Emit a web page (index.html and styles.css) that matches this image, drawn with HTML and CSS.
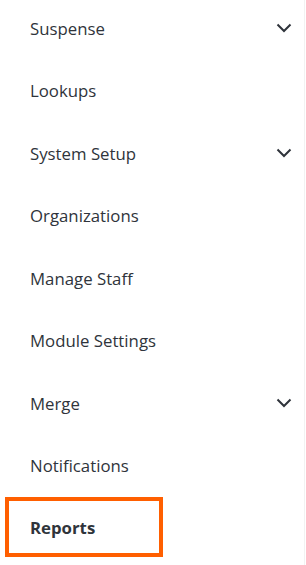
FILE: index.html
```html
<!DOCTYPE html>
<html lang="en">
<head>
    <meta charset="UTF-8">
    <meta name="viewport" content="width=device-width, initial-scale=1.0">
    <title>Admin Menu</title>
    <link rel="stylesheet" href="styles.css">
</head>
<body>
    <nav class="side-menu">
        <a class="menu-item" href="#">
            <span>Suspense</span>
            <svg class="chevron" viewBox="0 0 16 10" width="16" height="10"><path d="M1.5 1.5 L8 8 L14.5 1.5"/></svg>
        </a>
        <a class="menu-item" href="#"><span>Lookups</span></a>
        <a class="menu-item" href="#">
            <span>System Setup</span>
            <svg class="chevron" viewBox="0 0 16 10" width="16" height="10"><path d="M1.5 1.5 L8 8 L14.5 1.5"/></svg>
        </a>
        <a class="menu-item" href="#"><span>Organizations</span></a>
        <a class="menu-item" href="#"><span>Manage Staff</span></a>
        <a class="menu-item" href="#"><span>Module Settings</span></a>
        <a class="menu-item" href="#">
            <span>Merge</span>
            <svg class="chevron" viewBox="0 0 16 10" width="16" height="10"><path d="M1.5 1.5 L8 8 L14.5 1.5"/></svg>
        </a>
        <a class="menu-item" href="#"><span>Notifications</span></a>
        <a class="menu-item active" href="#"><span>Reports</span></a>
    </nav>
</body>
</html>
```

FILE: styles.css
```css
body {
    margin: 0;
    font-family: "Open Sans", Arial, sans-serif;
    background: #fff;
}
.side-menu {
    display: flex;
    flex-direction: column;
    width: 305px;
    border-right: 1px solid #f2f2f2;
    min-height: 565px;
    box-sizing: border-box;
}
.menu-item {
    display: flex;
    align-items: center;
    justify-content: space-between;
    height: 62.5px;
    padding: 0 12px 0 30px;
    box-sizing: border-box;
    color: #2f343b;
    font-size: 16.8px;
    text-decoration: none;
}
.menu-item:first-child {
    margin-top: -3px;
}
.chevron {
    fill: none;
    stroke: #2f343b;
    stroke-width: 2;
}
.menu-item.active {
    width: 158px;
    height: 60px;
    margin-left: 5px;
    padding-left: 21px;
    border: 4px solid #ff5f00;
    font-weight: 700;
}
```
